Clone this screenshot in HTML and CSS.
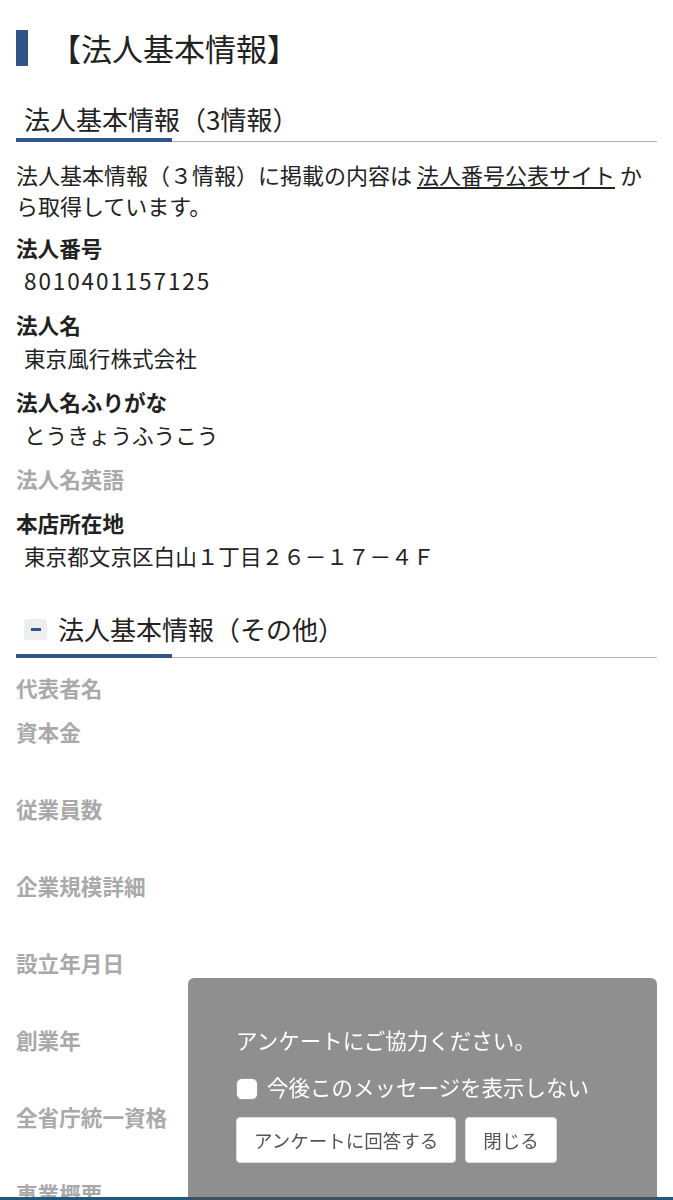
FILE: index.html
```html
<!DOCTYPE html>
<html lang="ja">
<head>
<meta charset="utf-8">
<title>法人基本情報</title>
<link rel="stylesheet" href="styles.css">
</head>
<body>
<main class="page">
  <h1 class="page-title"><span class="title-text">【法人基本情報】</span></h1>

  <section class="block">
    <h2 class="sec-head"><span class="sec-title">法人基本情報（3情報）</span></h2>
    <p class="lead">法人基本情報（３情報）に掲載の内容は <a href="#" class="lead-link">法人番号公表サイト</a> から取得しています。</p>
    <dl class="info">
      <div class="item"><dt class="label">法人番号</dt><dd class="value num">8010401157125</dd></div>
      <div class="item"><dt class="label">法人名</dt><dd class="value">東京風行株式会社</dd></div>
      <div class="item"><dt class="label">法人名ふりがな</dt><dd class="value">とうきょうふうこう</dd></div>
      <div class="item"><dt class="label label-empty">法人名英語</dt></div>
      <div class="item"><dt class="label">本店所在地</dt><dd class="value">東京都文京区白山１丁目２６－１７－４Ｆ</dd></div>
    </dl>
  </section>

  <section class="block">
    <h2 class="sec-head sec-head-toggle"><span class="toggle"><span class="toggle-bar"></span></span><span class="sec-title sec-title-toggle">法人基本情報（その他）</span></h2>
    <dl class="info info-other">
      <div class="item"><dt class="label label-empty">代表者名</dt></div>
      <div class="item"><dt class="label label-empty">資本金</dt><dd class="value"></dd></div>
      <div class="item"><dt class="label label-empty">従業員数</dt><dd class="value"></dd></div>
      <div class="item"><dt class="label label-empty">企業規模詳細</dt><dd class="value"></dd></div>
      <div class="item"><dt class="label label-empty">設立年月日</dt><dd class="value"></dd></div>
      <div class="item"><dt class="label label-empty">創業年</dt><dd class="value"></dd></div>
      <div class="item"><dt class="label label-empty">全省庁統一資格</dt><dd class="value"></dd></div>
      <div class="item"><dt class="label label-empty">事業概要</dt><dd class="value"></dd></div>
    </dl>
  </section>
</main>

<div class="survey">
  <p class="survey-text">アンケートにご協力ください。</p>
  <label class="survey-optout"><input type="checkbox" class="optout-check"><span>今後このメッセージを表示しない</span></label>
  <div class="survey-actions">
    <button type="button" class="survey-btn">アンケートに回答する</button>
    <button type="button" class="survey-btn">閉じる</button>
  </div>
</div>

<div class="footer-bar"></div>
</body>
</html>
```

FILE: styles.css
```css
* { box-sizing: border-box; }

html, body {
  margin: 0;
  padding: 0;
  background: #ffffff;
}

body {
  font-family: "Noto Sans CJK JP", "Noto Sans", sans-serif;
  color: #222222;
  font-size: 21.6px;
}

.page {
  padding: 0 16px 60px;
}

.page-title {
  margin: 30px 0 0;
  height: 36px;
  display: flex;
  align-items: center;
  font-weight: 400;
  font-size: 31px;
  line-height: 36px;
}

.page-title::before {
  content: "";
  display: block;
  width: 12px;
  height: 36px;
  background: #2f5488;
  flex: none;
}

.title-text {
  margin-left: 22px;
}

.sec-head {
  margin: 36px 0 0;
  padding: 0 0 6px 8px;
  font-weight: 400;
  font-size: 26px;
  line-height: 34px;
  display: flex;
  align-items: center;
  background:
    linear-gradient(#2f5488, #2f5488) left bottom / 156px 4px no-repeat,
    linear-gradient(#b4b4b4, #b4b4b4) left bottom / 100% 1.5px no-repeat;
}

.sec-head-toggle {
  margin-top: 40px;
  padding-bottom: 12px;
}

.toggle {
  width: 23px;
  height: 21px;
  border-radius: 3px;
  background: #eceeef;
  display: flex;
  align-items: center;
  justify-content: center;
  flex: none;
  margin-right: 11px;
}

.toggle-bar {
  display: block;
  width: 10px;
  height: 3px;
  background: #2f5488;
}

.lead {
  margin: 17px 0 0;
  line-height: 31px;
  font-size: 22px;
}

.lead-link {
  color: #222222;
  text-decoration: underline;
  text-underline-offset: 3px;
}

.info {
  margin: 10px 0 0;
}

.info-other {
  margin-top: 13px;
}

.item {
  margin-bottom: 11px;
}

.label {
  font-weight: 700;
  line-height: 33px;
  color: #222222;
}

.label-empty {
  color: #a9a9a9;
}

.value {
  margin: 0;
  padding-left: 8px;
  line-height: 33px;
  min-height: 33px;
}

.num {
  font-size: 22.5px;
  letter-spacing: 1.9px;
}

.survey {
  position: fixed;
  left: 188px;
  right: 16px;
  top: 978px;
  height: 260px;
  z-index: 10;
  background: rgba(78, 78, 78, 0.63);
  border-radius: 6px 6px 0 0;
  padding: 47px 20px 0 48px;
  color: #ffffff;
}

.survey-text {
  margin: 0;
  line-height: 30px;
  font-size: 21.5px;
}

.survey-optout {
  margin-top: 17px;
  display: flex;
  align-items: center;
  line-height: 30px;
  font-size: 21.5px;
}

.optout-check {
  appearance: none;
  -webkit-appearance: none;
  width: 22px;
  height: 22px;
  margin: 3px 9px 0 0;
  background: #ffffff;
  border: 1px solid #9a9a9a;
  border-radius: 6px;
  flex: none;
}

.survey-actions {
  margin-top: 15px;
  display: flex;
  gap: 9px;
}

.survey-btn {
  height: 46px;
  padding: 0 17px;
  background: #ffffff;
  border: 1px solid #dddddd;
  border-radius: 4px;
  color: #555555;
  font-family: "Noto Sans CJK JP", "Noto Sans", sans-serif;
  font-size: 18.5px;
}

.footer-bar {
  position: fixed;
  left: 0;
  right: 0;
  bottom: 0;
  height: 3px;
  background: #22587e;
  z-index: 5;
}
```
